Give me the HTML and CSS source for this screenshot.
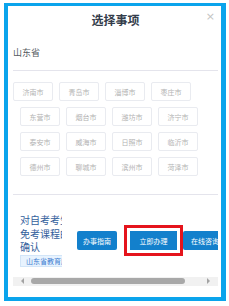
FILE: index.html
```html
<!DOCTYPE html>
<html lang="zh-CN">
<head>
<meta charset="utf-8">
<title>选择事项</title>
<link rel="stylesheet" href="styles.css">
</head>
<body>
<div class="dialog">
  <div class="header">
    <span></span>
    <span class="title">选择事项</span>
    <span class="close">×</span>
  </div>
  <div class="province">山东省</div>
  <div class="cities">
    <div class="row">
      <span class="city">济南市</span><span class="city">青岛市</span><span class="city">淄博市</span><span class="city">枣庄市</span>
    </div>
    <div class="row indent">
      <span class="city">东营市</span><span class="city">烟台市</span><span class="city">潍坊市</span><span class="city">济宁市</span>
    </div>
    <div class="row indent">
      <span class="city">泰安市</span><span class="city">威海市</span><span class="city">日照市</span><span class="city">临沂市</span>
    </div>
    <div class="row indent">
      <span class="city">德州市</span><span class="city">聊城市</span><span class="city">滨州市</span><span class="city">菏泽市</span>
    </div>
  </div>
  <div class="divider"></div>
  <div class="items">
    <div class="item-row">
      <div class="desc">
        <div class="desc-text">对自考考生免考课程的确认</div>
        <span class="tag">山东省教育厅</span>
      </div>
      <div class="btns">
        <span class="btn btn-guide">办事指南</span>
        <span class="btn btn-apply">立即办理</span>
        <span class="btn btn-consult">在线咨询</span>
      </div>
    </div>
  </div>
  <div class="scrollbar">
    <span class="arrow arrow-left"></span>
    <span class="thumb"></span>
    <span class="arrow arrow-right"></span>
  </div>
</div>
</body>
</html>
```

FILE: styles.css
```css
html, body {
  margin: 0;
  padding: 0;
  background: #ffffff;
}

body {
  font-family: "Noto Sans CJK SC", "Noto Sans", sans-serif;
}

.dialog {
  margin: 3px 0 0 4px;
  width: 222px;
  height: 298px;
  box-sizing: border-box;
  border-style: solid;
  border-color: #0aa4ec;
  border-width: 3px 5px 4px 4px;
  padding: 0 3px 0 5px;
  background: #ffffff;
  overflow: hidden;
}

.header {
  height: 28px;
  display: grid;
  grid-template-columns: 1fr auto 1fr;
  align-items: center;
}

.title {
  font-size: 12px;
  font-weight: 700;
  color: #343d4b;
  line-height: 14px;
}

.close {
  justify-self: end;
  align-self: start;
  margin-top: 5px;
  margin-right: 3px;
  font-size: 11px;
  line-height: 12px;
  color: #c4c4c4;
  font-family: "DejaVu Sans", sans-serif;
}

.province {
  padding: 13px 0 11px;
  font-size: 9px;
  line-height: 12px;
  color: #555a60;
  border-bottom: 1px solid #e4e4ec;
}

.cities {
  padding-top: 11px;
  display: flex;
  flex-direction: column;
  gap: 6px;
}

.row {
  display: flex;
  gap: 6px;
}

.row.indent {
  margin-left: 7px;
}

.city {
  width: 40px;
  height: 19px;
  box-sizing: border-box;
  border: 1px solid #e9ebf0;
  border-radius: 2px;
  display: flex;
  align-items: center;
  justify-content: center;
  font-size: 7px;
  color: #b3b3b3;
}

.divider {
  margin-top: 18px;
  height: 1px;
  background: #e4e4ec;
}

.items {
  padding-top: 18px;
  overflow: hidden;
}

.item-row {
  display: flex;
  align-items: center;
  width: max-content;
}

.desc {
  margin-left: 7px;
  width: 42px;
  overflow: hidden;
}

.desc-text {
  width: 52px;
  font-size: 10px;
  line-height: 13.5px;
  color: #33609c;
}

.tag {
  display: block;
  width: max-content;
  height: 10px;
  line-height: 10px;
  margin-top: 1px;
  padding: 0 5px;
  font-size: 7px;
  color: #3a7bd0;
  background: #e8f3fe;
  border: 1px solid #d2e5f8;
  white-space: nowrap;
}

.btns {
  margin-left: 15px;
  margin-top: 2px;
  display: flex;
}

.btn {
  height: 19px;
  display: flex;
  align-items: center;
  justify-content: center;
  background: #1380cc;
  color: #ffffff;
  font-size: 7px;
  border-radius: 2px;
  flex-shrink: 0;
}

.btn-guide {
  width: 40px;
  margin-right: 13px;
}

.btn-apply {
  width: 47px;
  margin-right: 6px;
  border-radius: 0;
  outline: 3px solid #e5141c;
  outline-offset: 3px;
}

.btn-consult {
  width: 44px;
}

.scrollbar {
  margin-top: 10px;
  height: 9px;
  background: #f1f1f1;
  display: flex;
  align-items: center;
}

.arrow {
  width: 0;
  height: 0;
  border-top: 3px solid transparent;
  border-bottom: 3px solid transparent;
}

.arrow-left {
  margin-left: 8px;
  border-right: 3px solid #a3a3a3;
}

.thumb {
  margin-left: 7px;
  width: 154px;
  height: 6px;
  border-radius: 3px;
  background: #a8a8a8;
}

.arrow-right {
  margin-left: 22px;
  border-left: 3px solid #a3a3a3;
}
```
